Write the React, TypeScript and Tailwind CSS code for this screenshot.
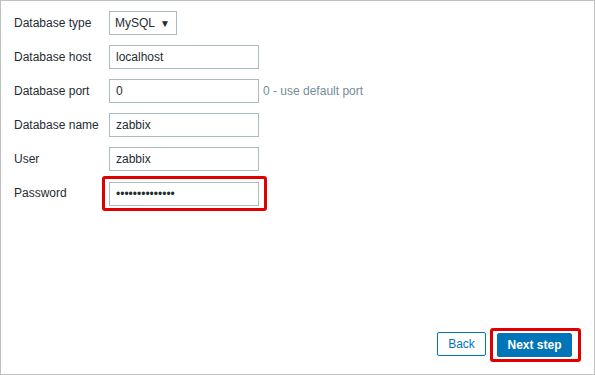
import React from "react";

const labelCls = "w-[95px] shrink-0 text-[12px] text-[#1f2c33]";
const inputCls =
  "h-[24px] w-[150px] border border-[#acbbc2] bg-white px-[6px] text-[12px] text-[#1f2c33] outline-none";

function Row({ label, children }: { label: string; children: React.ReactNode }) {
  return (
    <div className="flex h-[24px] items-center">
      <span className={labelCls}>{label}</span>
      {children}
    </div>
  );
}

function Highlight({ className }: { className: string }) {
  return (
    <span
      className={`pointer-events-none absolute rounded-[3px] border-[3px] border-[#e00000] ${className}`}
    />
  );
}

export default function App() {
  return (
    <div
      className="flex h-[375px] w-[595px] flex-col border border-[#c0c0c0] bg-white"
      style={{ fontFamily: '"Liberation Sans", Arial, sans-serif' }}
    >
      <div className="flex flex-col gap-[10px] pl-[13px] pt-[10px]">
        <Row label="Database type">
          <div className="flex h-[24px] w-[68px] items-center justify-between border border-[#acbbc2] pl-[5px] pr-[6px] text-[12px] text-[#1f2c33]">
            <span>MySQL</span>
            <span className="text-[10px]">▼</span>
          </div>
        </Row>
        <Row label="Database host">
          <input className={inputCls} defaultValue="localhost" />
        </Row>
        <Row label="Database port">
          <input className={inputCls} defaultValue="0" />
          <span className="ml-[4px] text-[12px] text-[#768d99]">0 - use default port</span>
        </Row>
        <Row label="Database name">
          <input className={inputCls} defaultValue="zabbix" />
        </Row>
        <Row label="User">
          <input className={inputCls} defaultValue="zabbix" />
        </Row>
        <Row label="Password">
          <div className="relative">
            <input className={inputCls} type="password" defaultValue="zabbixpassword" />
            <Highlight className="-bottom-[5px] -left-[7px] -right-[8px] -top-[5px]" />
          </div>
        </Row>
      </div>

      <div className="mt-auto flex justify-end gap-[11px] pb-[17px] pr-[22px]">
        <button className="h-[24px] w-[49px] rounded-[2px] border border-[#0275b8] bg-white text-[12px] text-[#0275b8]">
          Back
        </button>
        <div className="relative">
          <button className="h-[24px] w-[75px] rounded-[2px] border border-[#0275b8] bg-[#0275b8] text-[12px] font-bold text-white">
            Next step
          </button>
          <Highlight className="-bottom-[5px] -left-[7px] -right-[9px] -top-[4px]" />
        </div>
      </div>
    </div>
  );
}
